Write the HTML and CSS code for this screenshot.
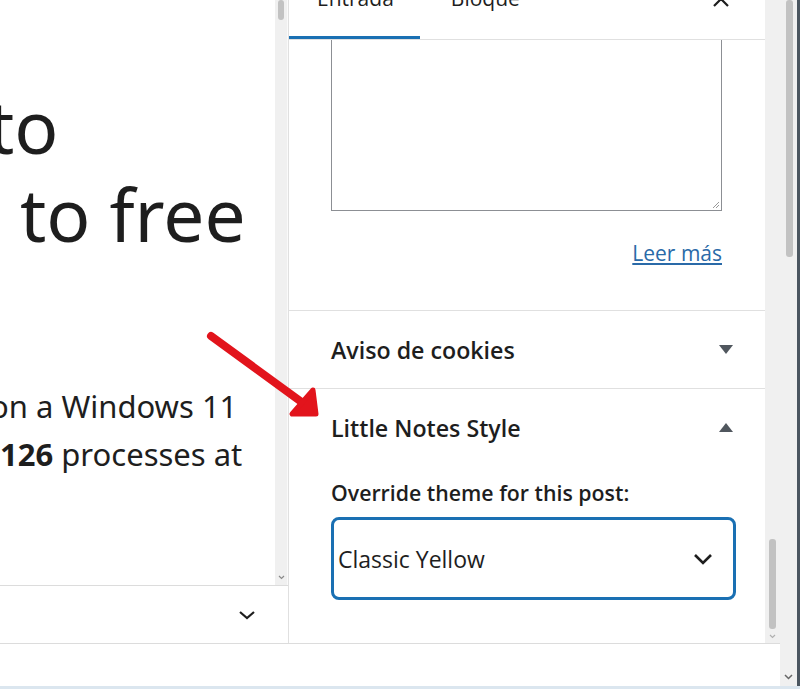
FILE: index.html
```html
<!DOCTYPE html>
<html lang="es">

<head>
    <meta charset="UTF-8">
    <meta name="viewport" content="width=device-width, initial-scale=1.0">
    <title>Little Notes Style - Editor</title>
    <link rel="stylesheet" href="styles.css">
</head>

<body>
    <div class="screen">
        <div class="app">
            <div class="workspace">
                <div class="panes">
                    <div class="editor">
                        <div class="editor-view">
                            <article class="canvas">
                                <h1 class="headline">
                                    <span class="line first">to</span>
                                    <span class="line second">to free</span>
                                </h1>
                                <p class="body-text">
                                    <span class="line lead">on a Windows 11</span>
                                    <span class="line"><strong>126</strong> processes at</span>
                                </p>
                            </article>
                            <div class="scrollbar thin">
                                <div class="thumb"></div>
                                <div class="spacer"></div>
                                <svg class="step" width="7" height="5" viewBox="0 0 7 5"><path d="M1 1l2.5 2.5L6 1" fill="none" stroke="#8a8a8a" stroke-width="1.2"/></svg>
                            </div>
                        </div>
                        <div class="editor-foot">
                            <svg width="18" height="10" viewBox="0 0 18 10"><path d="M2 2l7 6 7-6" fill="none" stroke="#1e1e1e" stroke-width="2.2"/></svg>
                        </div>
                    </div>

                    <aside class="sidebar">
                        <div class="sidebar-inner">
                            <div class="sidebar-head">
                                <div class="tab active">Entrada</div>
                                <div class="tab">Bloque</div>
                                <svg class="close" width="18" height="18" viewBox="0 0 18 18"><path d="M2 2l14 14M16 2L2 16" stroke="#1e1e1e" stroke-width="2.2"/></svg>
                            </div>

                            <div class="excerpt">
                                <div class="excerpt-box">
                                    <svg class="grip" width="8" height="8" viewBox="0 0 8 8"><path d="M1 7l6-6M4 7l3-3" stroke="#9a9a9a" stroke-width="1"/></svg>
                                </div>
                                <div class="more"><a href="#">Leer más</a></div>
                            </div>

                            <div class="panel">
                                <div class="panel-title">
                                    <span>Aviso de cookies</span>
                                    <span class="caret down"></span>
                                </div>
                            </div>

                            <div class="panel open">
                                <div class="panel-title">
                                    <span>Little Notes Style</span>
                                    <span class="caret up"></span>
                                </div>
                                <div class="panel-body">
                                    <label class="field-label" for="note-theme">Override theme for this post:</label>
                                    <div class="select">
                                        <span id="note-theme">Classic Yellow</span>
                                        <svg width="20" height="12" viewBox="0 0 20 12"><path d="M2 2l8 8 8-8" fill="none" stroke="#1e1e1e" stroke-width="2.6"/></svg>
                                    </div>
                                </div>
                            </div>
                        </div>
                        <div class="scrollbar side">
                            <div class="spacer"></div>
                            <div class="thumb"></div>
                            <svg class="step" width="7" height="5" viewBox="0 0 7 5"><path d="M1 1l2.5 2.5L6 1" fill="none" stroke="#b0b0b0" stroke-width="1.2"/></svg>
                        </div>
                    </aside>
                </div>
                <div class="footer"></div>
            </div>
            <div class="scrollbar page">
                <div class="thumb"></div>
                <div class="spacer"></div>
                <svg class="step" width="9" height="6" viewBox="0 0 9 6"><path d="M1 1l3.5 3.5L8 1" fill="none" stroke="#666" stroke-width="1.5"/></svg>
            </div>
            <div class="frame-edge"></div>
        </div>
        <div class="status-strip"></div>

        <!-- annotation arrow drawn over the screenshot -->
        <svg class="annotation" width="800" height="689" viewBox="0 0 800 689">
            <path d="M211 336L307 406" stroke="#e2141c" stroke-width="8" stroke-linecap="round"/>
            <path d="M292 414L316 414L313 390Z" fill="#e2141c" stroke="#e2141c" stroke-width="5" stroke-linejoin="round"/>
        </svg>
    </div>
</body>

</html>
```

FILE: styles.css
```css
* {
    box-sizing: border-box;
}

body {
    margin: 0;
    font-family: 'Open Sans', 'Noto Sans', sans-serif;
    color: #1e1e1e;
    background: #fff;
}

.screen {
    position: relative;
    width: 800px;
    height: 689px;
    overflow: hidden;
    background: #fff;
}

.app {
    display: flex;
    height: 686px;
}

.workspace {
    width: 780px;
    display: flex;
    flex-direction: column;
}

.panes {
    display: flex;
    height: 643px;
}

/* Left: post canvas */
.editor {
    width: 288px;
    display: flex;
    flex-direction: column;
}

.editor-view {
    display: flex;
    height: 585px;
}

.canvas {
    width: 275px;
    overflow: hidden;
    font-family: 'Noto Sans', sans-serif;
}

.line {
    display: block;
    white-space: nowrap;
}

.headline {
    margin: 82px 0 0 -12px;
    font-size: 73px;
    font-weight: 400;
    line-height: 88px;
}

.headline .second {
    padding-left: 32px;
}

.body-text {
    margin: 124px 0 0 -10px;
    font-size: 31px;
    line-height: 48px;
}

.body-text .line + .line {
    margin-left: 10px;
}

.editor-foot {
    flex: 1;
    display: flex;
    align-items: center;
    justify-content: flex-end;
    padding-right: 32px;
    border-top: 1px solid #dcdcdc;
}

/* Scrollbars */
.scrollbar {
    display: flex;
    flex-direction: column;
    align-items: center;
    background: #f0f0f0;
}

.scrollbar .spacer {
    flex: 1;
}

.scrollbar .thumb {
    background: #c2c2c2;
    border-radius: 3px;
}

.scrollbar.thin {
    width: 13px;
    border-right: 1px solid #fafafa;
}

.scrollbar.thin .thumb {
    width: 6px;
    height: 20px;
}

.scrollbar.thin .step {
    margin-bottom: 5px;
}

.scrollbar.side {
    width: 15px;
}

.scrollbar.side .thumb {
    width: 7px;
    height: 90px;
}

.scrollbar.side .step {
    margin: 5px 0 4px;
}

.scrollbar.page {
    width: 17px;
}

.scrollbar.page .thumb {
    width: 7px;
    height: 257px;
    margin-left: 2px;
}

.scrollbar.page .step {
    margin-bottom: 6px;
}

.frame-edge {
    width: 3px;
    background: #4b5660;
}

.footer {
    flex: 1;
    border-top: 1px solid #dcdcdc;
}

.status-strip {
    height: 3px;
    background: #dbe6ef;
}

/* Right: settings sidebar */
.sidebar {
    flex: 1;
    display: flex;
    border-left: 1px solid #e0e0e0;
}

.sidebar-inner {
    width: 476px;
    overflow: hidden;
}

.sidebar-head {
    display: flex;
    height: 56px;
    margin-top: -16px;
    border-bottom: 1px solid #e0e0e0;
    font-size: 21px;
}

.tab {
    padding: 0 26px 0 28px;
    line-height: 28px;
}

.tab.active {
    box-shadow: inset 0 -3px 0 #1a70b3;
}

.tab + .tab {
    padding: 0 30px 0 31px;
}

.close {
    margin: 6px 35px 0 auto;
}

.excerpt {
    padding: 0 43px 43px 42px;
    border-bottom: 1px solid #e0e0e0;
}

.excerpt-box {
    position: relative;
    height: 171px;
    border: 1px solid #8c8f94;
    border-top: 0;
}

.grip {
    position: absolute;
    right: 1px;
    bottom: 1px;
}

.more {
    margin-top: 28px;
    text-align: right;
    font-size: 21px;
    line-height: 28px;
}

.more a {
    color: #2a6aa8;
}

.panel:not(.open) {
    border-bottom: 1px solid #e0e0e0;
}

.panel-title {
    display: flex;
    align-items: center;
    justify-content: space-between;
    height: 77px;
    padding: 0 32px 0 42px;
    font-size: 23.2px;
    font-weight: 600;
}

.caret {
    width: 0;
    height: 0;
    border-left: 7px solid transparent;
    border-right: 7px solid transparent;
}

.caret.down {
    border-top: 9px solid #50575e;
}

.caret.up {
    border-bottom: 9px solid #50575e;
}

.panel-body {
    padding: 13px 29px 0 42px;
}

.field-label {
    display: block;
    font-size: 21.3px;
    font-weight: 600;
    line-height: 28px;
}

.select {
    display: flex;
    align-items: center;
    justify-content: space-between;
    height: 83px;
    margin-top: 10px;
    padding: 0 20px 0 4px;
    border: 3px solid #1a70b3;
    border-radius: 8px;
    font-size: 23px;
}

.annotation {
    position: absolute;
    top: 0;
    left: 0;
    pointer-events: none;
}
```
